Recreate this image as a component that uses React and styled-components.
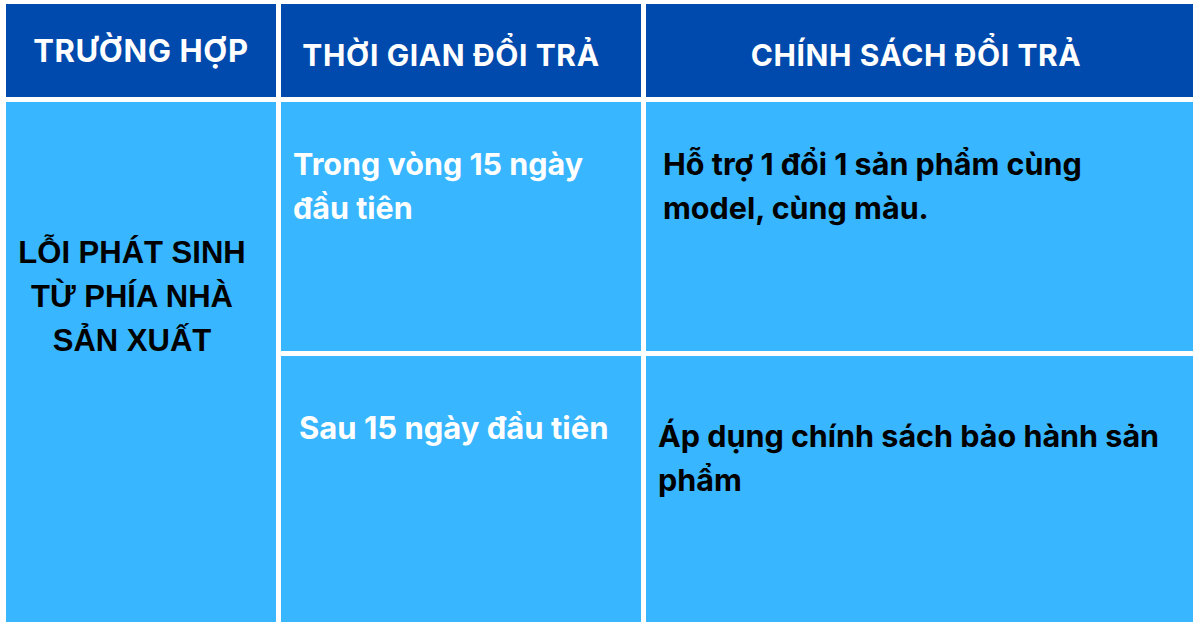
import React from "react";
import styled, { createGlobalStyle } from "styled-components";

const Global = createGlobalStyle`
  html, body { margin: 0; padding: 0; background: #ffffff; }
  body { width: 1200px; height: 628px; overflow: hidden; }
`;

const Table = styled.div`
  display: grid;
  grid-template-columns: 270px 360px 547px;
  grid-template-rows: 93px 249px 266px;
  gap: 5px;
  margin: 4px 0 0 6px;
`;

const HeadCell = styled.div`
  background: #004aad;
  color: #ffffff;
  display: flex;
  align-items: center;
  justify-content: center;
  padding-top: ${(p) => p.$dy || 0}px;
  padding-right: ${(p) => p.$dx || 0}px;
  font-family: Inter, "Noto Sans", sans-serif;
  font-weight: 700;
  font-size: ${(p) => p.$size || 30}px;
  letter-spacing: 0.6px;
  white-space: nowrap;
`;

const CaseCell = styled.div`
  grid-row: 2 / span 2;
  background: #38b6ff;
  color: #000000;
  display: flex;
  flex-direction: column;
  align-items: center;
  padding: 129px 18px 0 0;
  font-family: "Liberation Sans", Arial, sans-serif;
  font-weight: 700;
  font-size: 31px;
  line-height: 44px;
  text-align: center;
`;

const BodyCell = styled.div`
  background: #38b6ff;
  color: ${(p) => (p.$dark ? "#000000" : "#ffffff")};
  padding: ${(p) => p.$pt}px 10px 0 ${(p) => p.$pl}px;
  font-family: Inter, "Noto Sans", sans-serif;
  font-weight: 700;
  font-size: ${(p) => p.$size || 30.5}px;
  line-height: 44px;
`;

export default function App() {
  return (
    <>
      <Global />
      <Table>
        <HeadCell $size={31}>TRƯỜNG HỢP</HeadCell>
        <HeadCell $dy={8} $dx={20}>THỜI GIAN ĐỔI TRẢ</HeadCell>
        <HeadCell $dy={8} $dx={7}>CHÍNH SÁCH ĐỔI TRẢ</HeadCell>
        <CaseCell>
          <span>LỖI PHÁT SINH</span>
          <span>TỪ PHÍA NHÀ</span>
          <span>SẢN XUẤT</span>
        </CaseCell>
        <BodyCell $pt={40} $pl={12}>
          Trong vòng 15 ngày
          <br />
          đầu tiên
        </BodyCell>
        <BodyCell $dark $pt={40} $pl={17}>
          Hỗ trợ 1 đổi 1 sản phẩm cùng
          <br />
          model, cùng màu.
        </BodyCell>
        <BodyCell $pt={50} $pl={18} $size={31}>
          Sau 15 ngày đầu tiên
        </BodyCell>
        <BodyCell $dark $pt={58} $pl={12}>
          Áp dụng chính sách bảo hành sản
          <br />
          phẩm
        </BodyCell>
      </Table>
    </>
  );
}
